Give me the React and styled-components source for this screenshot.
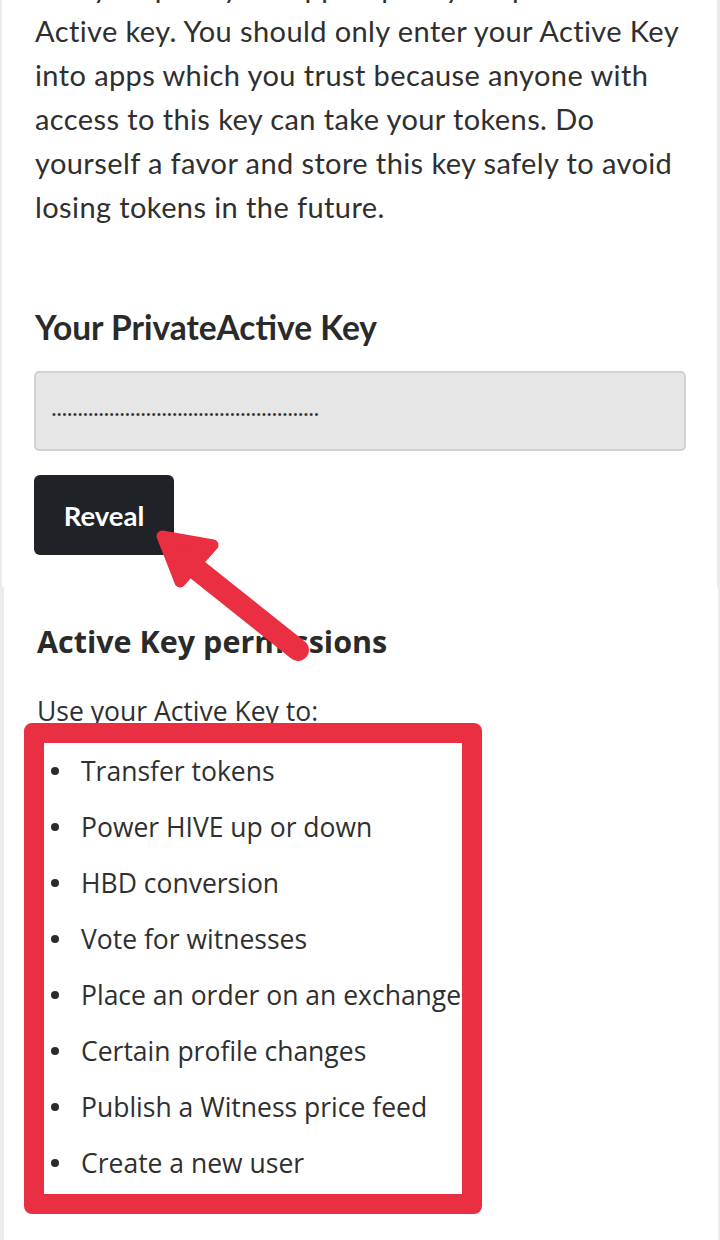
import React from "react";
import styled, { createGlobalStyle } from "styled-components";

const Global = createGlobalStyle`
  html, body { margin: 0; padding: 0; background: #ffffff; }
  body { font-family: Lato, "Liberation Sans", sans-serif; color: #2b2b2b; }
  * { box-sizing: border-box; }
`;

const Page = styled.div`
  position: relative;
  width: 720px;
  height: 1240px;
  overflow: hidden;
  background: #fff;
`;

const TopPanel = styled.section`
  border-left: 2px solid #ebebeb;
  border-right: 3px solid #ebebeb;
  padding: 0 30px 32px 33px;
`;

const Intro = styled.p`
  margin: -35px 0 0 0;
  font-family: Lato, "Liberation Sans", sans-serif;
  font-size: 29px;
  letter-spacing: 0.4px;
  line-height: 44px;
  color: #2f2f2f;
`;

const IntroLine = styled.span`
  display: block;
  white-space: nowrap;
`;

const KeyHeading = styled.h2`
  margin: 78px 0 0 0;
  font-family: Lato, "Liberation Sans", sans-serif;
  font-weight: 700;
  font-size: 33.5px;
  line-height: 40px;
  color: #2a2a2a;
`;

const KeyField = styled.div`
  margin-top: 24px;
  width: 652px;
  height: 80px;
  margin-left: -1px;
  background: #e6e6e6;
  border: 2px solid #d2d2d2;
  border-radius: 5px;
  display: flex;
  align-items: center;
  padding: 6px 0 0 16px;
`;

const Dots = styled.span`
  font-family: "Liberation Sans", sans-serif;
  font-size: 11px;
  letter-spacing: 1.4px;
  color: #333;
  line-height: 1;
`;

const RevealButton = styled.button`
  margin-top: 24px;
  margin-left: -1px;
  width: 140px;
  height: 80px;
  background: #1f2327;
  color: #fff;
  border: none;
  border-radius: 6px;
  font-family: Lato, "Liberation Sans", sans-serif;
  font-weight: 700;
  font-size: 27.5px;
  display: block;
`;

const BottomPanel = styled.section`
  border-left: 4px solid #ebebeb;
  border-right: 2px solid #ebebeb;
  padding: 34px 0 40px 33px;
`;

const PermHeading = styled.h3`
  margin: 0;
  font-family: "Open Sans", "Noto Sans", sans-serif;
  font-weight: 700;
  font-size: 30.5px;
  line-height: 40px;
  color: #2a2a2a;
`;

const Lead = styled.p`
  margin: 30px 0 0 0;
  font-family: "Open Sans", "Noto Sans", sans-serif;
  font-size: 26.5px;
  line-height: 40px;
  color: #2f2f2f;
`;

const PermList = styled.ul`
  position: relative;
  list-style: none;
  margin: -8px 0 0 -13px;
  width: 458px;
  border: 20px solid #e92f41;
  border-radius: 8px;
  padding: 0 0 3px 7px;
  background: transparent;
`;

const PermItem = styled.li`
  display: flex;
  align-items: center;
  height: 56px;
  gap: 22px;
  font-family: "Open Sans", "Noto Sans", sans-serif;
  font-size: 26.5px;
  color: #2f2f2f;
  white-space: nowrap;
  &::before {
    content: "";
    width: 8px;
    height: 8px;
    border-radius: 50%;
    background: #2b2b2b;
    flex: none;
  }
`;

const ArrowLayer = styled.svg`
  position: absolute;
  left: 0;
  top: 0;
  pointer-events: none;
`;

const introLines = [
  "Many steps in your app require your private",
  "Active key. You should only enter your Active Key",
  "into apps which you trust because anyone with",
  "access to this key can take your tokens. Do",
  "yourself a favor and store this key safely to avoid",
  "losing tokens in the future.",
];

const items = [
  "Transfer tokens",
  "Power HIVE up or down",
  "HBD conversion",
  "Vote for witnesses",
  "Place an order on an exchange",
  "Certain profile changes",
  "Publish a Witness price feed",
  "Create a new user",
];

export default function App() {
  return (
    <Page>
      <Global />
      <TopPanel>
        <Intro>
          {introLines.map((l) => (
            <IntroLine key={l}>{l}</IntroLine>
          ))}
        </Intro>
        <KeyHeading>Your PrivateActive Key</KeyHeading>
        <KeyField>
          <Dots>{"•".repeat(51)}</Dots>
        </KeyField>
        <RevealButton>Reveal</RevealButton>
      </TopPanel>
      <BottomPanel>
        <PermHeading>Active Key permissions</PermHeading>
        <Lead>Use your Active Key to:</Lead>
        <PermList>
          {items.map((t) => (
            <PermItem key={t}>{t}</PermItem>
          ))}
        </PermList>
      </BottomPanel>
      <ArrowLayer width="720" height="1240" viewBox="0 0 720 1240">
        <line x1="185" y1="560" x2="298" y2="650" stroke="#e92f41" strokeWidth="22" strokeLinecap="round" />
        <polygon
          points="162,536 213,545 180,582"
          fill="#e92f41"
          stroke="#e92f41"
          strokeWidth="11"
          strokeLinejoin="round"
        />
      </ArrowLayer>
    </Page>
  );
}
